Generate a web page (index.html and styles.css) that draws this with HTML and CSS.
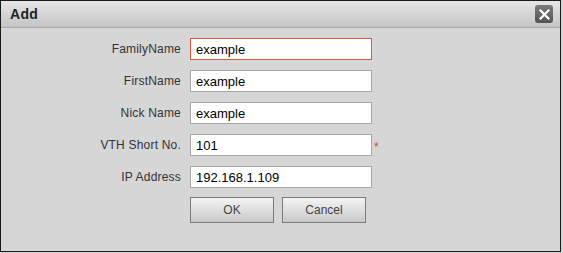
FILE: index.html
```html
<!DOCTYPE html>
<html lang="en">
<head>
  <meta charset="UTF-8" />
  <title>Add</title>
  <link rel="stylesheet" href="styles.css">
</head>
<body>

  <div class="dialog">
    <div class="dialog-title">
      <span class="title-text">Add</span>
      <span class="close-btn">
        <svg width="11" height="11" viewBox="0 0 11 11">
          <path d="M1.5 1.5 L9.5 9.5 M9.5 1.5 L1.5 9.5" stroke="#fff" stroke-width="2.2" stroke-linecap="square"/>
        </svg>
      </span>
    </div>

    <div class="dialog-body">
      <div class="form-row">
        <label class="form-label">FamilyName</label>
        <input class="form-input is-active" type="text" value="example">
      </div>
      <div class="form-row">
        <label class="form-label">FirstName</label>
        <input class="form-input" type="text" value="example">
      </div>
      <div class="form-row">
        <label class="form-label">Nick Name</label>
        <input class="form-input" type="text" value="example">
      </div>
      <div class="form-row">
        <label class="form-label">VTH Short No.</label>
        <input class="form-input" type="text" value="101">
        <span class="required">*</span>
      </div>
      <div class="form-row">
        <label class="form-label">IP Address</label>
        <input class="form-input" type="text" value="192.168.1.109">
      </div>
      <div class="form-actions">
        <button class="btn">OK</button>
        <button class="btn">Cancel</button>
      </div>
    </div>
  </div>

</body>
</html>
```

FILE: styles.css
```css
body {
  margin: 0;
  background: #d4d4d4;
  font-family: 'Liberation Sans', Arial, sans-serif;
}

.dialog {
  width: 559px;
  height: 250px;
  border: 1px solid #1a1a1a;
  background: #d6d6d6;
  box-sizing: content-box;
}

.dialog-title {
  height: 26px;
  display: flex;
  align-items: center;
  justify-content: space-between;
  padding: 0 7px 0 9px;
  background: linear-gradient(#e6e6e6, #c4c4c4);
  border-bottom: 1px solid #a8a8a8;
}

.title-text {
  font-size: 14px;
  font-weight: 700;
  color: #222;
  letter-spacing: 0.3px;
}

.close-btn {
  width: 18px;
  height: 18px;
  border-radius: 3px;
  background: linear-gradient(#7a7a7a, #555);
  display: flex;
  align-items: center;
  justify-content: center;
}

.dialog-body {
  padding-top: 10px;
}

.form-row {
  display: flex;
  align-items: center;
  height: 22px;
  margin-bottom: 10px;
}

.form-label {
  width: 189px;
  text-align: right;
  padding-right: 9px;
  box-sizing: border-box;
  font-size: 12px;
  letter-spacing: 0.2px;
  color: #333;
}

.form-input {
  width: 182px;
  height: 22px;
  box-sizing: border-box;
  border: 1px solid #a6a6a6;
  background: #fff;
  padding: 0 5px;
  font-family: 'Liberation Sans', Arial, sans-serif;
  font-size: 13px;
  color: #000;
  outline: none;
  margin: 0;
}

.form-input.is-active {
  border-color: #e0573f;
}

.required {
  color: #e03a3a;
  font-size: 12px;
  margin-left: 2px;
  margin-top: 3px;
}

.form-actions {
  display: flex;
  gap: 8px;
  padding-left: 189px;
  margin-top: -1px;
}

.btn {
  width: 84px;
  height: 26px;
  border: 1px solid #7a7a7a;
  background: linear-gradient(#f4f4f4, #c9c9c9);
  font-family: 'Liberation Sans', Arial, sans-serif;
  font-size: 12px;
  color: #444;
  padding: 0;
}
```
